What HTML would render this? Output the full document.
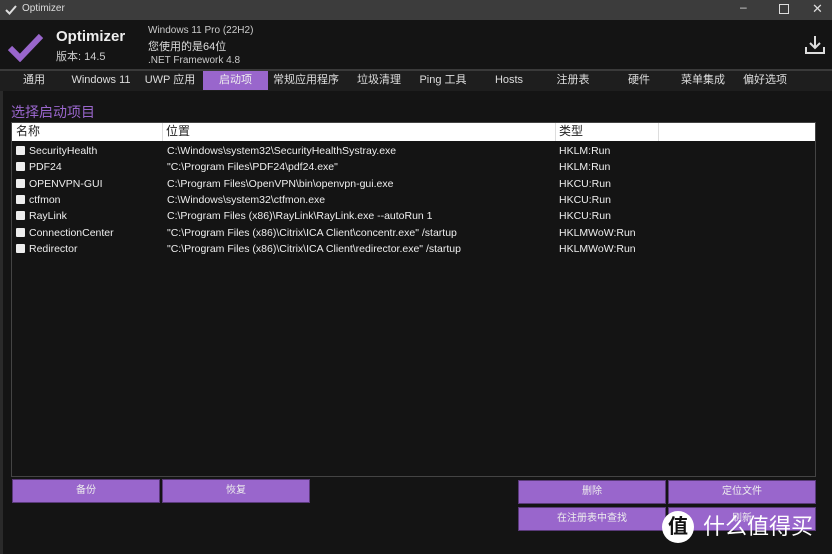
<!DOCTYPE html>
<html><head><meta charset="utf-8"><style>
*{margin:0;padding:0;box-sizing:border-box}
body{width:832px;height:554px;background:#141414;font-family:"Liberation Sans","Noto Sans CJK SC",sans-serif;color:#e8e8e8;position:relative;overflow:hidden}
.a{position:absolute;white-space:nowrap}
.tab{position:absolute;top:71px;height:19px;font-size:11px;line-height:19px;text-align:center;color:#ddd}
.btn{position:absolute;height:24px;background:#9966cc;border:1px solid #5a3a7a;color:#eee;font-size:10px;line-height:22px;text-align:center}
.row{position:absolute;font-size:10.5px;color:#eee}
.cb{position:absolute;width:9px;height:9px;background:#eee;border-radius:1px}
</style></head><body>
<div class="a" style="left:0;top:0;width:832px;height:20px;background:#3c3c3c"></div>
<svg class="a" style="left:5px;top:4px" width="12" height="12" viewBox="0 0 12 12"><path d="M1 6 L4.5 9.5 L11 2" stroke="#ddd" stroke-width="2" fill="none"/></svg>
<div class="a" style="left:22px;top:3px;font-size:10px;color:#ddd">Optimizer</div>
<div class="a" style="left:740px;top:0;font-size:12px;color:#ddd">–</div>
<div class="a" style="left:779px;top:4px;width:10px;height:10px;border:1px solid #ddd"></div>
<div class="a" style="left:812px;top:1px;font-size:13px;color:#ddd">✕</div>
<div class="a" style="left:0;top:20px;width:832px;height:49px;background:#141414"></div>
<svg class="a" style="left:7px;top:32px" width="36" height="30" viewBox="0 0 36 30"><path d="M3 16 L13 26 L34 4" stroke="#9966cc" stroke-width="6" fill="none"/></svg>
<div class="a" style="left:56px;top:28px;font-size:15px;font-weight:bold;color:#eee">Optimizer</div>
<div class="a" style="left:56px;top:48px;font-size:11px;color:#ccc">版本: 14.5</div>
<div class="a" style="left:148px;top:25px;font-size:10px;color:#ccc">Windows 11 Pro (22H2)</div>
<div class="a" style="left:148px;top:38px;font-size:11px;color:#ddd">您使用的是64位</div>
<div class="a" style="left:148px;top:55px;font-size:10px;color:#ccc">.NET Framework 4.8</div>
<svg class="a" style="left:804px;top:34px" width="22" height="22" viewBox="0 0 22 22"><path d="M11 2 V14 M6 9 L11 14 L16 9 M2 13 V19 H20 V13" stroke="#ddd" stroke-width="2" fill="none"/></svg>
<div class="a" style="left:0;top:69px;width:832px;height:2px;background:#3a3a3a"></div>
<div class="a" style="left:0;top:71px;width:832px;height:20px;background:#1e1e1e"></div>
<div class="a" style="left:0;top:91px;width:3px;height:463px;background:#2a2a2a"></div>
<div class="tab" style="left:14px;width:40px">通用</div>
<div class="tab" style="left:68px;width:66px">Windows 11</div>
<div class="tab" style="left:140px;width:60px">UWP 应用</div>
<div class="tab" style="left:203px;width:65px;background:#9966cc;color:#eee">启动项</div>
<div class="tab" style="left:270px;width:72px">常规应用程序</div>
<div class="tab" style="left:350px;width:58px">垃圾清理</div>
<div class="tab" style="left:412px;width:62px">Ping 工具</div>
<div class="tab" style="left:484px;width:50px">Hosts</div>
<div class="tab" style="left:548px;width:50px">注册表</div>
<div class="tab" style="left:614px;width:50px">硬件</div>
<div class="tab" style="left:674px;width:58px">菜单集成</div>
<div class="tab" style="left:736px;width:58px">偏好选项</div>
<div class="a" style="left:11px;top:102px;font-size:14px;color:#9966cc">选择启动项目</div>
<div class="a" style="left:11px;top:122px;width:805px;height:355px;border:1px solid #444;background:#141414"></div>
<div class="a" style="left:12px;top:123px;width:803px;height:18px;background:#fff;color:#222;font-size:12px;line-height:17px">
<span class="a" style="left:4px">名称</span><span class="a" style="left:150px;top:0;width:1px;height:18px;background:#ddd"></span><span class="a" style="left:154px">位置</span><span class="a" style="left:543px;top:0;width:1px;height:18px;background:#ddd"></span><span class="a" style="left:547px">类型</span><span class="a" style="left:646px;top:0;width:1px;height:18px;background:#ddd"></span></div>
<div class="cb" style="left:16px;top:146px"></div><div class="row" style="left:29px;top:145px">SecurityHealth</div><div class="row" style="left:167px;top:145px">C:\Windows\system32\SecurityHealthSystray.exe</div><div class="row" style="left:559px;top:145px">HKLM:Run</div>
<div class="cb" style="left:16px;top:162px"></div><div class="row" style="left:29px;top:161px">PDF24</div><div class="row" style="left:167px;top:161px">"C:\Program Files\PDF24\pdf24.exe"</div><div class="row" style="left:559px;top:161px">HKLM:Run</div>
<div class="cb" style="left:16px;top:179px"></div><div class="row" style="left:29px;top:178px">OPENVPN-GUI</div><div class="row" style="left:167px;top:178px">C:\Program Files\OpenVPN\bin\openvpn-gui.exe</div><div class="row" style="left:559px;top:178px">HKCU:Run</div>
<div class="cb" style="left:16px;top:195px"></div><div class="row" style="left:29px;top:194px">ctfmon</div><div class="row" style="left:167px;top:194px">C:\Windows\system32\ctfmon.exe</div><div class="row" style="left:559px;top:194px">HKCU:Run</div>
<div class="cb" style="left:16px;top:211px"></div><div class="row" style="left:29px;top:210px">RayLink</div><div class="row" style="left:167px;top:210px">C:\Program Files (x86)\RayLink\RayLink.exe --autoRun 1</div><div class="row" style="left:559px;top:210px">HKCU:Run</div>
<div class="cb" style="left:16px;top:228px"></div><div class="row" style="left:29px;top:227px">ConnectionCenter</div><div class="row" style="left:167px;top:227px">"C:\Program Files (x86)\Citrix\ICA Client\concentr.exe" /startup</div><div class="row" style="left:559px;top:227px">HKLMWoW:Run</div>
<div class="cb" style="left:16px;top:244px"></div><div class="row" style="left:29px;top:243px">Redirector</div><div class="row" style="left:167px;top:243px">"C:\Program Files (x86)\Citrix\ICA Client\redirector.exe" /startup</div><div class="row" style="left:559px;top:243px">HKLMWoW:Run</div>
<div class="btn" style="left:12px;top:479px;width:148px">备份</div>
<div class="btn" style="left:162px;top:479px;width:148px">恢复</div>
<div class="btn" style="left:518px;top:480px;width:148px">删除</div>
<div class="btn" style="left:668px;top:480px;width:148px">定位文件</div>
<div class="btn" style="left:518px;top:507px;width:148px">在注册表中查找</div>
<div class="btn" style="left:668px;top:507px;width:148px">刷新</div>
<div class="a" style="left:662px;top:511px;width:32px;height:32px;border-radius:50%;background:#fff;color:#111;font-size:20px;line-height:32px;text-align:center;font-weight:bold">值</div>
<div class="a" style="left:703px;top:511px;font-size:22px;color:#fff;line-height:32px">什么值得买</div>
</body></html>
